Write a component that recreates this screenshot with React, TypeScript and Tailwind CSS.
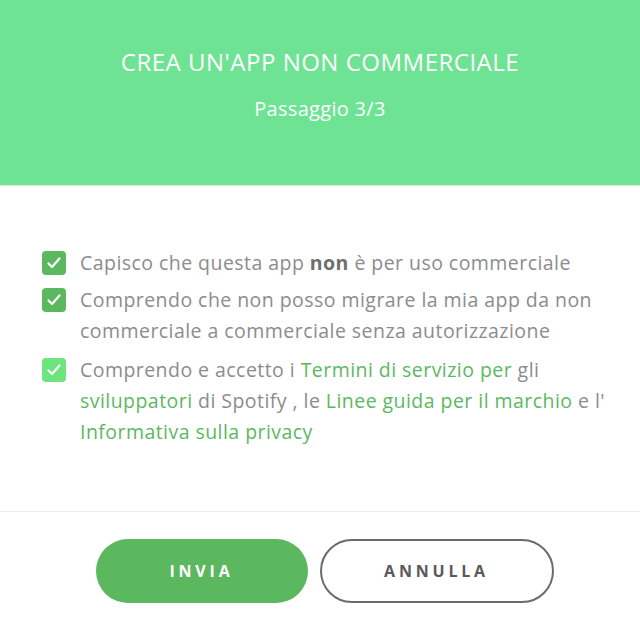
import React from "react";

function Check({ color }: { color: string }) {
  return (
    <span className={`mt-[4px] flex h-6 w-6 shrink-0 items-center justify-center rounded-[4px] ${color}`}>
      <svg width="14" height="12" viewBox="0 0 14 12" fill="none">
        <path d="M1.5 6.5 L5 10 L12.5 1.5" stroke="white" strokeWidth="2.2" strokeLinecap="round" strokeLinejoin="round" />
      </svg>
    </span>
  );
}

export default function App() {
  return (
    <div className="flex h-[624px] w-[640px] flex-col bg-white" style={{ fontFamily: "'Open Sans', Lato, sans-serif" }}>
      <div className="flex h-[186px] shrink-0 flex-col items-center border-b border-[#e6e6e6] bg-[#6ee394] pt-[45px] text-white">
        <h1 className="text-[24px] leading-[34px] tracking-[0.5px]">CREA UN'APP NON COMMERCIALE</h1>
        <p className="mt-[16px] text-[20px] leading-[28px] tracking-[0.3px]">Passaggio 3/3</p>
      </div>
      <div className="flex flex-1 flex-col gap-[6px] pl-[42px] pr-[10px] pt-[61px] text-[19.5px] leading-[31px] tracking-[0.45px] text-[#8c8c8c]">
        <div className="flex gap-[14px]">
          <Check color="bg-[#5cb85f]" />
          <p>Capisco che questa app <b className="font-bold text-[#6e6e6e]">non</b> è per uso commerciale</p>
        </div>
        <div className="flex gap-[14px]">
          <Check color="bg-[#5cb85f]" />
          <p>Comprendo che non posso migrare la mia app da non<br />commerciale a commerciale senza autorizzazione</p>
        </div>
        <div className="mt-[2px] flex gap-[14px]">
          <Check color="bg-[#6ee47f]" />
          <p>
            Comprendo e accetto i <span className="text-[#5cb85f]">Termini di servizio per</span> gli
            <br />
            <span className="text-[#5cb85f]">sviluppatori</span> di Spotify , le{" "}
            <span className="text-[#5cb85f]">Linee guida per il marchio</span> e l'
            <br />
            <span className="text-[#5cb85f]">Informativa sulla privacy</span>
          </p>
        </div>
      </div>
      <div className="flex h-[113px] shrink-0 items-center justify-center gap-[12px] border-t border-[#ececec] pl-[9px] pt-[5px]">
        <button className="h-[64px] w-[212px] rounded-full bg-[#5cb85f] text-[16px] font-bold tracking-[3.8px] text-white">INVIA</button>
        <button className="h-[64px] w-[234px] rounded-full border-2 border-[#6b6b6b] bg-white text-[16px] font-bold tracking-[3.8px] text-[#5a5a5a]">ANNULLA</button>
      </div>
    </div>
  );
}
